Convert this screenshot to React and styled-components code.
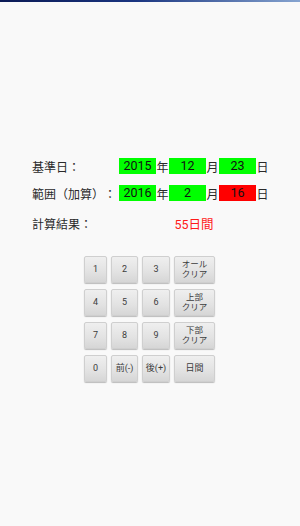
import React from 'react';
import styled, { createGlobalStyle } from 'styled-components';

const GlobalStyle = createGlobalStyle`
  html, body {
    margin: 0;
    padding: 0;
    background: #f9f9f9;
  }
  body {
    font-family: Roboto, "Noto Sans CJK JP", sans-serif;
    text-spacing-trim: space-all;
  }
`;

const Screen = styled.div`
  width: 300px;
  height: 526px;
  background: #f9f9f9;
  overflow: hidden;
`;

const StatusStrip = styled.div`
  height: 2px;
  background: linear-gradient(to right, #0b1a55 0%, #1a3580 45%, #86a4d0 100%);
`;

const Form = styled.div`
  padding: 156px 0 0 32px;
  display: flex;
  flex-direction: column;
`;

const Row = styled.div`
  display: flex;
  align-items: center;
  height: 16px;
  margin-bottom: ${(props) => props.gap || 0}px;
`;

const Label = styled.span`
  width: 87px;
  font-family: "Noto Sans CJK TC", "Noto Sans CJK JP", sans-serif;
  font-size: 12px;
  color: #2a2a2a;
  white-space: nowrap;
  text-spacing-trim: space-all;
`;

const Field = styled.span`
  width: 37px;
  height: 16px;
  line-height: 16px;
  text-align: center;
  font-size: 12.5px;
  color: #111;
  background: ${(props) => (props.alert ? '#ff0000' : '#00ff00')};
`;

const Unit = styled.span`
  width: 13px;
  font-size: 12px;
  color: #2a2a2a;
  text-align: center;
`;

const Result = styled.span`
  width: 150px;
  text-align: center;
  font-size: 12.5px;
  color: #ff1a1a;
`;

const Keypad = styled.div`
  margin: 25px 0 0 84px;
  display: grid;
  grid-template-columns: 23px 27px 28px 41px;
  grid-auto-rows: 27px;
  column-gap: 4px;
  row-gap: 6px;
`;

const Key = styled.button`
  margin: 0;
  padding: 0;
  border: 1px solid #cfcfcf;
  border-radius: 2px;
  background: linear-gradient(to bottom, #efefef 0%, #e2e2e2 60%, #d6d6d6 100%);
  box-shadow: 0 1px 1px rgba(0, 0, 0, 0.25);
  font-family: Roboto, "Noto Sans CJK JP", sans-serif;
  font-size: ${(props) => (props.small ? 8.5 : 9)}px;
  line-height: 1.15;
  color: #3c3c3c;
  white-space: pre-line;
  display: flex;
  align-items: center;
  justify-content: center;
  text-align: center;
`;

const dateRows = [
  { label: '基準日：', year: '2015', month: '12', day: '23', gap: 11 },
  { label: '範囲（加算）：', year: '2016', month: '2', day: '16', dayAlert: true, gap: 14 },
];

const keys = [
  { text: '1' }, { text: '2' }, { text: '3' }, { text: 'オール\nクリア', small: true },
  { text: '4' }, { text: '5' }, { text: '6' }, { text: '上部\nクリア', small: true },
  { text: '7' }, { text: '8' }, { text: '9' }, { text: '下部\nクリア', small: true },
  { text: '0' }, { text: '前(-)' }, { text: '後(+)' }, { text: '日間' },
];

const App = () => (
  <Screen>
    <GlobalStyle />
    <StatusStrip />
    <Form>
      {dateRows.map((r) => (
        <Row key={r.label} gap={r.gap}>
          <Label>{r.label}</Label>
          <Field>{r.year}</Field>
          <Unit>年</Unit>
          <Field>{r.month}</Field>
          <Unit>月</Unit>
          <Field alert={r.dayAlert}>{r.day}</Field>
          <Unit>日</Unit>
        </Row>
      ))}
      <Row>
        <Label>計算結果：</Label>
        <Result>55日間</Result>
      </Row>
    </Form>
    <Keypad>
      {keys.map((k) => (
        <Key key={k.text} small={k.small}>{k.text}</Key>
      ))}
    </Keypad>
  </Screen>
);

export default App;
